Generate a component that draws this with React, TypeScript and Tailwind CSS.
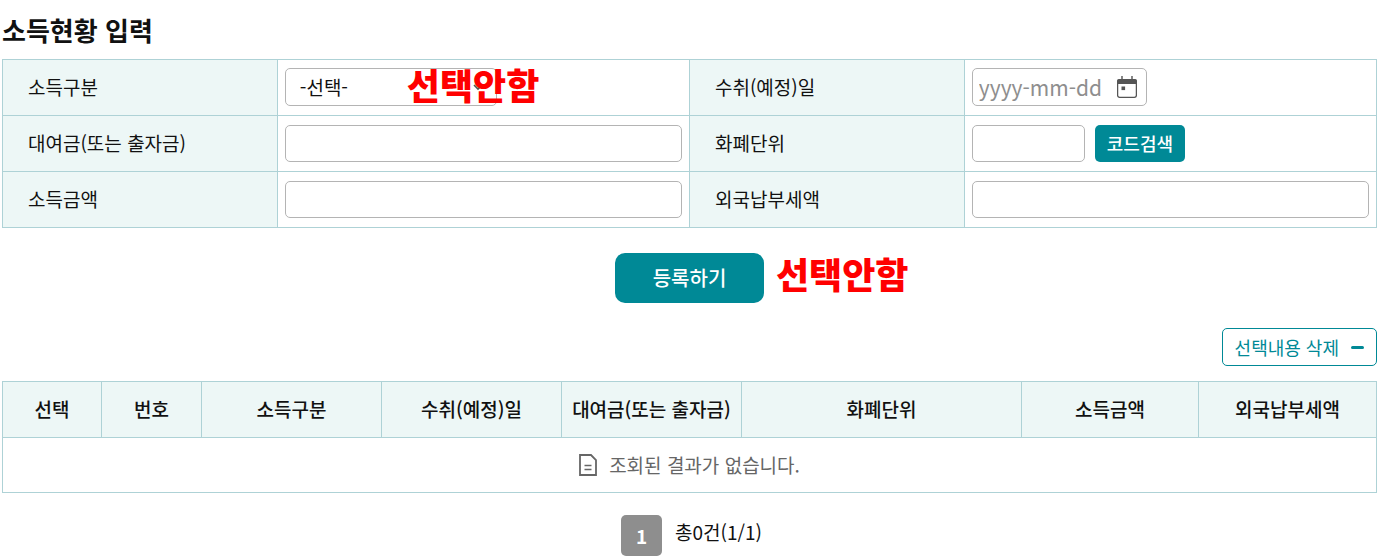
import type { ReactNode } from 'react'

interface FieldLabelProps {
  readonly htmlFor: string
  readonly children: ReactNode
}

interface TextFieldProps {
  readonly id: string
  readonly className: string
}

interface Column {
  readonly label: string
  readonly width: string
}

const columns: Column[] = [
  { label: '선택', width: 'w-[99px]' },
  { label: '번호', width: 'w-[100px]' },
  { label: '소득구분', width: 'w-[180px]' },
  { label: '수취(예정)일', width: 'w-[180px]' },
  { label: '대여금(또는 출자금)', width: 'w-[180px]' },
  { label: '화폐단위', width: 'w-[280px]' },
  { label: '소득금액', width: 'w-[177px]' },
  { label: '외국납부세액', width: 'w-auto' },
]

function FieldLabel({ htmlFor, children }: FieldLabelProps) {
  return (
    <th
      scope="row"
      className="h-14 border border-[#aed2d6] bg-[#edf7f6] pb-[2px] pl-[25px] text-left font-normal"
    >
      <label htmlFor={htmlFor}>{children}</label>
    </th>
  )
}

function FieldCell({ children }: { readonly children: ReactNode }) {
  return <td className="h-14 border border-[#aed2d6] px-[7px]">{children}</td>
}

function TextField({ id, className }: TextFieldProps) {
  return (
    <input
      id={id}
      type="text"
      className={`block h-[37px] rounded-[5px] border border-[#b4b4b4] bg-white px-3 ${className}`}
    />
  )
}

function Note({ children }: { readonly children: ReactNode }) {
  return (
    <span className="pointer-events-none block text-4xl leading-8 font-black whitespace-nowrap text-[#ff0000]">
      {children}
    </span>
  )
}

function CalendarIcon() {
  return (
    <svg width="20" height="22" viewBox="0 0 20 22" fill="none" aria-hidden="true">
      <path d="M5 0v4M15 0v4" stroke="#555" strokeWidth="1.4" />
      <rect x="0.6" y="4" width="18.8" height="17.3" rx="2" stroke="#555" strokeWidth="1.3" />
      <path d="M0 8V5a2 2 0 0 1 2-2h16a2 2 0 0 1 2 2v3z" fill="#555" />
      <rect x="4.5" y="10.5" width="3.6" height="3.6" fill="#555" />
    </svg>
  )
}

function DocumentIcon() {
  return (
    <svg
      width="18"
      height="22"
      viewBox="0 0 18 22"
      fill="none"
      stroke="#666"
      strokeWidth="1.8"
      aria-hidden="true"
    >
      <path d="M1 1h11l5 5v15H1z" />
      <path d="M5.5 11.5h7M5.5 15.5h7" strokeWidth="1.5" />
    </svg>
  )
}

export default function App() {
  return (
    <main
      lang="ko"
      className="bg-white pt-3 pr-4 pl-[2px] font-['Noto_Sans_CJK_KR',sans-serif] text-[19px] leading-7 text-[#111]"
    >
      <h1 className="text-[26px] leading-9 font-bold">소득현황 입력</h1>

      <form onSubmit={(e) => e.preventDefault()}>
        <table className="mt-[11px] w-full table-fixed border-collapse">
          <colgroup>
            <col className="w-[20%]" />
            <col className="w-[30%]" />
            <col className="w-[20%]" />
            <col className="w-[30%]" />
          </colgroup>
          <tbody>
            <tr>
              <FieldLabel htmlFor="income-type">소득구분</FieldLabel>
              <FieldCell>
                <div className="relative mb-[2px] w-[212px]">
                  <select
                    id="income-type"
                    className="block h-[38px] w-full appearance-none rounded-[5px] border border-[#b4b4b4] bg-white px-[14px]"
                  >
                    <option>-선택-</option>
                  </select>
                  <svg
                    className="pointer-events-none absolute top-4 right-[14px]"
                    width="10"
                    height="7"
                    viewBox="0 0 10 7"
                    fill="none"
                    aria-hidden="true"
                  >
                    <path d="M1 1l4 4 4-4" stroke="#555" strokeWidth="1.6" />
                  </svg>
                  <div className="absolute top-0 left-[122px]">
                    <Note>선택안함</Note>
                  </div>
                </div>
              </FieldCell>
              <FieldLabel htmlFor="receipt-date">수취(예정)일</FieldLabel>
              <FieldCell>
                <div className="mb-[2px] flex h-[38px] w-[175px] items-center rounded-[5px] border border-[#b4b4b4] pr-[9px] pl-[6px]">
                  <input
                    id="receipt-date"
                    type="text"
                    placeholder="yyyy-mm-dd"
                    className="min-w-0 flex-1 text-[21px] placeholder:text-[#8e8e8e]"
                  />
                  <button type="button" aria-label="날짜 선택">
                    <CalendarIcon />
                  </button>
                </div>
              </FieldCell>
            </tr>
            <tr>
              <FieldLabel htmlFor="loan">대여금(또는 출자금)</FieldLabel>
              <FieldCell>
                <TextField id="loan" className="w-full" />
              </FieldCell>
              <FieldLabel htmlFor="currency">화폐단위</FieldLabel>
              <FieldCell>
                <div className="flex gap-[10px]">
                  <TextField id="currency" className="w-[113px]" />
                  <button
                    type="button"
                    className="h-[37px] rounded-[5px] bg-[#008996] px-3 pb-[2px] text-lg leading-7 font-medium text-white"
                  >
                    코드검색
                  </button>
                </div>
              </FieldCell>
            </tr>
            <tr>
              <FieldLabel htmlFor="income">소득금액</FieldLabel>
              <FieldCell>
                <TextField id="income" className="w-full" />
              </FieldCell>
              <FieldLabel htmlFor="foreign-tax">외국납부세액</FieldLabel>
              <FieldCell>
                <TextField id="foreign-tax" className="w-full" />
              </FieldCell>
            </tr>
          </tbody>
        </table>

        <div className="mt-[25px] flex justify-center">
          <div className="relative">
            <button
              type="submit"
              className="h-[50px] w-[149px] rounded-[10px] bg-[#008996] text-xl font-medium text-white"
            >
              등록하기
            </button>
            <div className="absolute top-1 left-full ml-3">
              <Note>선택안함</Note>
            </div>
          </div>
        </div>
      </form>

      <div className="mt-[25px] flex justify-end">
        <button
          type="button"
          className="flex h-[38px] items-center gap-3 rounded-[5px] border border-[#008996] px-3 text-lg text-[#008996]"
        >
          선택내용 삭제
          <span className="h-[3px] w-[13px] rounded-full bg-[#008996]" />
        </button>
      </div>

      <table className="mt-[15px] w-full table-fixed border-collapse text-center">
        <thead>
          <tr>
            {columns.map(({ label, width }) => (
              <th
                key={label}
                scope="col"
                className={`h-14 border border-[#aed2d6] bg-[#edf7f6] pb-[2px] font-medium whitespace-nowrap ${width}`}
              >
                {label}
              </th>
            ))}
          </tr>
        </thead>
        <tbody>
          <tr>
            <td colSpan={columns.length} className="h-[55px] border border-[#aed2d6] text-[#666]">
              <div className="flex items-center justify-center gap-3">
                <DocumentIcon />
                조회된 결과가 없습니다.
              </div>
            </td>
          </tr>
        </tbody>
      </table>

      <nav aria-label="페이지" className="mt-[22px] flex justify-center gap-[13px] pl-1">
        <button
          type="button"
          aria-current="page"
          className="size-[41px] rounded-[5px] bg-[#8e8e8e] font-bold text-white"
        >
          1
        </button>
        <p className="pt-[3px]">총0건(1/1)</p>
      </nav>
    </main>
  )
}
